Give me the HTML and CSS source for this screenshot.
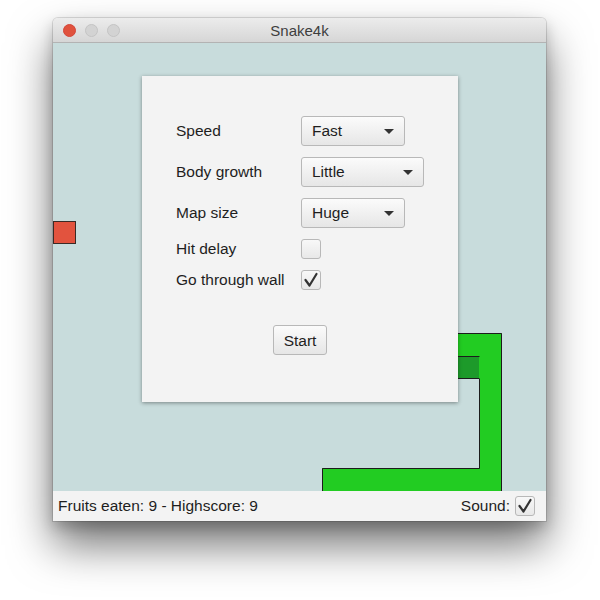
FILE: index.html
```html
<!DOCTYPE html>
<html>
<head>
<meta charset="utf-8">
<link rel="stylesheet" href="styles.css">
</head>
<body>
<div class="window">
  <div class="titlebar">
    <div class="lights">
      <span class="light close"></span>
      <span class="light"></span>
      <span class="light"></span>
    </div>
    <div class="title">Snake4k</div>
    <div></div>
  </div>
  <div class="game">
    <svg class="board" width="493" height="448" viewBox="0 0 493 448">
      <rect x="0.5" y="178.5" width="22" height="22" fill="#e2533e" stroke="#3a2a26" stroke-width="1"/>
      <rect x="300" y="290" width="149" height="23" fill="#22cc22"/>
      <rect x="426" y="290" width="23" height="158" fill="#22cc22"/>
      <rect x="269" y="425" width="180" height="23" fill="#22cc22"/>
      <rect x="400" y="313" width="26" height="23" fill="#1d9a2a"/>
      <path d="M300 290.5 H448.5 V448 M269.5 448 V425.5 H426.5 V336 M300 313.5 H426.5 M300 335.5 H426.5" fill="none" stroke="#1c1c1c" stroke-width="1"/>
    </svg>
    <div class="dialog">
      <div class="form">
        <span class="label">Speed</span>
        <div class="combo short"><span>Fast</span><span class="arrow"></span></div>
        <span class="label">Body growth</span>
        <div class="combo wide"><span>Little</span><span class="arrow"></span></div>
        <span class="label">Map size</span>
        <div class="combo short"><span>Huge</span><span class="arrow"></span></div>
        <span class="label">Hit delay</span>
        <span class="checkbox"></span>
        <span class="label">Go through wall</span>
        <span class="checkbox"><svg width="20" height="20" viewBox="0 0 20 20"><path d="M4.5 10 L8.5 15.5 L15.5 4" fill="none" stroke="#333" stroke-width="2.2" stroke-linecap="round" stroke-linejoin="round"/></svg></span>
      </div>
      <div class="actions"><button class="button">Start</button></div>
    </div>
  </div>
  <div class="statusbar">
    <span class="status-text">Fruits eaten: 9 - Highscore: 9</span>
    <span class="sound">Sound:<span class="checkbox"><svg width="20" height="20" viewBox="0 0 20 20"><path d="M4.5 10 L8.5 15.5 L15.5 4" fill="none" stroke="#333" stroke-width="2.2" stroke-linecap="round" stroke-linejoin="round"/></svg></span></span>
  </div>
</div>
</body>
</html>
```
FILE: styles.css
```css
* { box-sizing: border-box; }
html, body {
  margin: 0;
  padding: 0;
  background: #ffffff;
  font-family: "Liberation Sans", Arial, sans-serif;
  color: #222;
}
html { height: 100%; }
body {
  min-height: 600px;
  padding: 18px 0 0 53px;
}
.window {
  width: 493px;
  border-radius: 5px 5px 0 0;
  box-shadow: 0 0 0 1px rgba(0,0,0,0.12), 0 24px 44px rgba(0,0,0,0.55), 0 6px 14px rgba(0,0,0,0.2);
  background: #f3f3f3;
}
.titlebar {
  height: 25px;
  border-radius: 5px 5px 0 0;
  background: linear-gradient(#ececec, #d6d6d6);
  border-bottom: 1px solid #b3b3b3;
  display: grid;
  grid-template-columns: 1fr auto 1fr;
  align-items: center;
}
.lights {
  display: flex;
  gap: 9px;
  padding-left: 10px;
}
.light {
  width: 13px;
  height: 13px;
  border-radius: 50%;
  background: #d3d3d3;
  border: 1px solid #c4c4c4;
}
.light.close {
  background: #e0523d;
  border-color: #d4463a;
}
.title {
  font-size: 15px;
  color: #3e3e3e;
}
.game {
  position: relative;
  height: 448px;
  background: #c8dcdc;
}
.board {
  display: block;
}
.dialog {
  position: absolute;
  left: 89px;
  top: 33px;
  width: 316px;
  height: 326px;
  background: #f3f3f3;
  box-shadow: 0 1px 4px rgba(0,0,0,0.4);
  padding: 40px 0 0 34px;
}
.form {
  display: grid;
  grid-template-columns: 125px auto;
  row-gap: 11px;
  align-items: center;
  justify-items: start;
}
.label {
  font-size: 15.5px;
  color: #1e1e1e;
}
.combo {
  height: 30px;
  border: 1px solid #b8b8b8;
  border-radius: 3px;
  background: linear-gradient(#fbfbfb, #e6e6e6);
  display: flex;
  align-items: center;
  justify-content: space-between;
  padding: 0 10px 0 10px;
  font-size: 15.5px;
  color: #1e1e1e;
}
.combo.short { width: 104px; }
.combo.wide { width: 123px; }
.arrow {
  width: 0;
  height: 0;
  border-left: 5px solid transparent;
  border-right: 5px solid transparent;
  border-top: 5px solid #333;
}
.checkbox {
  width: 20px;
  height: 20px;
  border: 1px solid #b8b8b8;
  border-radius: 3px;
  background: linear-gradient(#f8f8f8, #e8e8e8);
  display: flex;
  align-items: center;
  justify-content: center;
}
.checkbox svg { display: block; flex: none; }
.actions {
  display: flex;
  justify-content: center;
  padding: 35px 34px 0 0;
}
.button {
  width: 54px;
  height: 30px;
  border: 1px solid #b8b8b8;
  border-radius: 3px;
  background: linear-gradient(#fbfbfb, #e6e6e6);
  font-family: "Liberation Sans", Arial, sans-serif;
  font-size: 15.5px;
  color: #1e1e1e;
  padding: 1px 0 0 0;
}
.statusbar {
  height: 30px;
  display: flex;
  align-items: center;
  justify-content: space-between;
  padding: 0 11px 0 5px;
  background: #f3f3f3;
  font-size: 15.5px;
  color: #1e1e1e;
}
.sound {
  display: flex;
  align-items: center;
  gap: 5px;
}
```
